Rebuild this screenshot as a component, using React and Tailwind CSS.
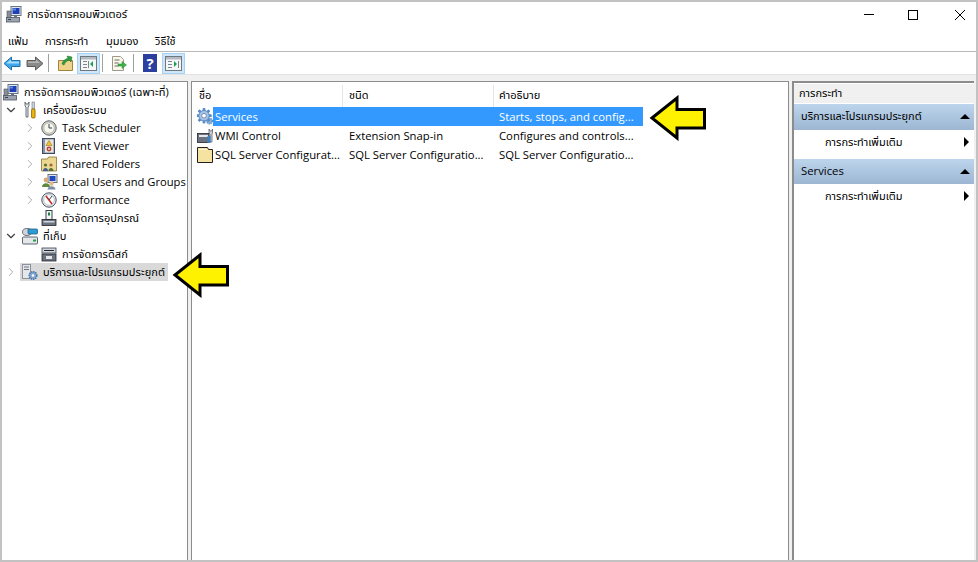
import { ChevronRight, ChevronDown } from 'lucide-react'

const fontStack = { fontFamily: '"Open Sans", "Noto Sans Thai", "Noto Sans", "DejaVu Sans", sans-serif' }

function ComputerIcon() {
  return (
    <svg width="16" height="17" viewBox="0 0 16 17" className="shrink-0">
      <rect x="5" y="0.5" width="10" height="9" fill="#dfe6ef" stroke="#6b7280" />
      <rect x="6.5" y="2" width="7" height="6" fill="#1f3fb8" />
      <rect x="7" y="2.5" width="3" height="2" fill="#5b8ce0" />
      <rect x="1" y="5" width="4" height="8" fill="#8a8f96" stroke="#4b5563" strokeWidth="0.6" />
      <rect x="0.5" y="11.5" width="13" height="4.5" fill="#9ca3af" stroke="#4b5563" strokeWidth="0.8" />
      <rect x="2" y="13" width="3" height="1" fill="#374151" />
      <rect x="8" y="9.5" width="3" height="2" fill="#6b7280" />
    </svg>
  )
}

function ToolsIcon() {
  return (
    <svg width="16" height="18" viewBox="0 0 16 18" className="shrink-0">
      <path d="M3 1v4l1 1v10h2V6l1-1V1L6 3H4z" fill="#e5e7eb" stroke="#4b5563" strokeWidth="0.8" />
      <rect x="10" y="1" width="2.4" height="7" fill="#d1d5db" stroke="#6b7280" strokeWidth="0.6" />
      <rect x="9.5" y="8" width="3.6" height="9" rx="1" fill="#eab308" stroke="#7c5a00" strokeWidth="0.7" />
    </svg>
  )
}

function ClockIcon() {
  return (
    <svg width="16" height="16" viewBox="0 0 16 16" className="shrink-0">
      <circle cx="8" cy="8" r="7.2" fill="#d6d3c4" stroke="#5b6470" />
      <circle cx="8" cy="8" r="5.2" fill="#f7f6ef" stroke="#a8a38f" strokeWidth="0.6" />
      <path d="M8 4v4h3" fill="none" stroke="#374151" strokeWidth="1" />
    </svg>
  )
}

function EventIcon() {
  return (
    <svg width="16" height="16" viewBox="0 0 16 16" className="shrink-0">
      <rect x="1.5" y="0.5" width="12" height="15" fill="#8794ab" stroke="#3f4a60" />
      <rect x="4" y="1.5" width="8.5" height="13" fill="#e8e6d8" />
      <path d="M8 2.5l3 5H5z" fill="#f2c230" stroke="#85660d" strokeWidth="0.5" />
      <circle cx="8" cy="11" r="2.4" fill="#b8403a" />
      <rect x="7" y="10.4" width="2" height="1.2" fill="#fff" />
    </svg>
  )
}

function SharedIcon() {
  return (
    <svg width="16" height="16" viewBox="0 0 16 16" className="shrink-0">
      <path d="M0.5 3h6l1-2h8v14H0.5z" fill="#ecd793" stroke="#8d7434" strokeWidth="0.8" />
      <circle cx="4.5" cy="9" r="1.6" fill="#54733a" />
      <path d="M2 15c0-4 5-4 5 0z" fill="#3d5d8f" />
      <circle cx="10" cy="9" r="1.6" fill="#9a6a3a" />
      <path d="M7.5 15c0-4 5-4 5 0z" fill="#54733a" />
    </svg>
  )
}

function UsersIcon() {
  return (
    <svg width="17" height="16" viewBox="0 0 17 16" className="shrink-0">
      <rect x="7" y="0.5" width="9" height="8" fill="#dfe6ef" stroke="#6b7280" />
      <rect x="8.5" y="2" width="6" height="5" fill="#2148bd" />
      <circle cx="5" cy="6" r="2.4" fill="#d9a874" />
      <path d="M1 13c0-5 8-5 8 0z" fill="#5d8a3c" />
      <circle cx="10.5" cy="9.5" r="2.2" fill="#e0b98a" />
      <path d="M6.5 15.5c0-4.5 8-4.5 8 0z" fill="#7b8ea8" />
    </svg>
  )
}

function PerfIcon() {
  return (
    <svg width="16" height="16" viewBox="0 0 16 16" className="shrink-0">
      <circle cx="8" cy="8" r="7.2" fill="#e5e7eb" stroke="#4b5563" />
      <circle cx="8" cy="8" r="5.3" fill="#fff" stroke="#9ca3af" strokeWidth="0.6" />
      <path d="M5 4l6 8" stroke="#c62828" strokeWidth="1.6" />
      <path d="M8 8l3-4" stroke="#374151" strokeWidth="1" />
    </svg>
  )
}

function DeviceIcon() {
  return (
    <svg width="16" height="16" viewBox="0 0 16 16" className="shrink-0">
      <rect x="5" y="0.5" width="6" height="9" fill="#f3f4f6" stroke="#374151" />
      <rect x="7" y="2.5" width="2" height="3" fill="#15803d" />
      <rect x="1" y="9.5" width="14" height="6" fill="#6b7280" stroke="#27272a" strokeWidth="0.8" />
      <rect x="2.5" y="11" width="11" height="1.5" fill="#d1d5db" />
    </svg>
  )
}

function StorageIcon() {
  return (
    <svg width="16" height="17" viewBox="0 0 16 17" className="shrink-0">
      <ellipse cx="5" cy="4" rx="4.5" ry="3.5" fill="#d1d5db" stroke="#4b5563" strokeWidth="0.8" />
      <rect x="6" y="1" width="9.5" height="5" rx="1" fill="#2f9bd4" stroke="#1e5f86" strokeWidth="0.8" />
      <rect x="0.5" y="9" width="15" height="7" rx="1" fill="#e5e7eb" stroke="#4b5563" strokeWidth="0.9" />
      <rect x="11" y="11.5" width="3" height="2" fill="#22a34a" />
    </svg>
  )
}

function DiskIcon() {
  return (
    <svg width="16" height="16" viewBox="0 0 16 16" className="shrink-0">
      <rect x="1" y="2" width="14" height="5" fill="#d1d5db" stroke="#374151" strokeWidth="0.8" />
      <rect x="3" y="4" width="10" height="1" fill="#27272a" />
      <rect x="1" y="8" width="14" height="7" fill="#6b7280" stroke="#27272a" strokeWidth="0.8" />
      <rect x="5" y="10" width="6" height="3" fill="#e5e7eb" />
    </svg>
  )
}

function GearIcon() {
  const teeth = [0, 45, 90, 135, 180, 225, 270, 315]
  return (
    <svg width="16" height="17" viewBox="0 0 16 17" className="shrink-0">
      <circle cx="12.5" cy="13" r="2.8" fill="#8fb0d6" stroke="#5b8bc4" strokeDasharray="1.2 0.8" strokeWidth="1.4" />
      {teeth.map((a) => (
        <rect key={a} x="5.8" y="0.2" width="2.4" height="15" fill="#5b8bc4" transform={`rotate(${a} 7 7.7)`} />
      ))}
      <circle cx="7" cy="7.7" r="5.2" fill="#a9c4e4" stroke="#5b8bc4" />
      <circle cx="7" cy="7.7" r="2.3" fill="#fff" stroke="#47709f" strokeWidth="0.7" />
    </svg>
  )
}

function ServicesTreeIcon() {
  return (
    <svg width="16" height="17" viewBox="0 0 16 17" className="shrink-0">
      <rect x="0.5" y="0.5" width="8" height="14" fill="#e5e7eb" stroke="#8b929c" />
      <rect x="2" y="2.5" width="5" height="1" fill="#6b7280" />
      <rect x="2" y="5" width="5" height="1" fill="#6b7280" />
      <circle cx="11" cy="11.5" r="3.8" fill="#7fa6cf" stroke="#4f7aa8" strokeDasharray="1.4 0.8" strokeWidth="1.6" />
      <circle cx="11" cy="11.5" r="1.3" fill="#fff" />
    </svg>
  )
}

function WmiIcon() {
  return (
    <svg width="16" height="16" viewBox="0 0 16 16" className="shrink-0">
      <rect x="0.5" y="5.5" width="11.5" height="9" fill="#6b7280" stroke="#27272a" strokeWidth="0.8" />
      <rect x="2" y="7" width="9" height="2" fill="#e5e7eb" />
      <path d="M12 1v4l1 1v8h2V6l.5-1V1l-1 2h-1.4z" fill="#d1d5db" stroke="#4b5563" strokeWidth="0.7" />
      <rect x="10.5" y="8" width="3" height="7" fill="#3b82c4" />
    </svg>
  )
}

function FolderIcon() {
  return (
    <svg width="16" height="16" viewBox="0 0 16 16" className="shrink-0">
      <path d="M0.5 0.5h10l1 2h4v13H0.5z" fill="#f6e3a1" stroke="#222" />
      <path d="M2 2h8v1H2z" fill="#fff6d2" />
    </svg>
  )
}

function YellowArrow({ className }) {
  return (
    <svg width="58" height="46" viewBox="0 0 58 46" className={`absolute ${className}`}>
      <path d="M3 23L28 3v11.5h27.5v18.5H28V43z" fill="#fff200" stroke="#000" strokeWidth="3" />
    </svg>
  )
}

function ToolBtn({ children }) {
  return (
    <div className="flex h-[21px] w-[23px] items-center justify-center border border-[#a6d3f5] bg-[#cfe6f9]">
      {children}
    </div>
  )
}

function PaneIcon({ right }) {
  return (
    <svg width="17" height="15" viewBox="0 0 17 15">
      <rect x="0.5" y="0.5" width="16" height="14" fill="#f4f6f8" stroke="#6f7780" />
      <rect x="1" y="1" width="15" height="2.5" fill="#b4bac2" />
      <rect x="3" y="5" width="4" height="1" fill="#7b8591" />
      <rect x="3" y="8" width="4" height="1" fill="#7b8591" />
      <rect x="3" y="11" width="4" height="1" fill="#7b8591" />
      <path d={right ? 'M9 5l3 3-3 3z' : 'M13 5l-3 3 3 3z'} fill="#16a34a" />
      <rect x={right ? 13 : 8} y="5" width="1" height="7" fill="#7b8591" />
    </svg>
  )
}

function Toolbar() {
  return (
    <div className="flex h-[22px] items-center">
      <svg width="18" height="15" viewBox="0 0 18 15" className="ml-px">
        <path d="M1 7.5L8.5 1v3.5h8.5v6H8.5V14z" fill="#3fa6e8" stroke="#1f6fb0" strokeLinejoin="round" />
        <path d="M3.5 7L8 3.5v2h8v2H4z" fill="#a4dcf9" />
      </svg>
      <svg width="18" height="15" viewBox="0 0 18 15" className="ml-[5px]">
        <path d="M17 7.5L9.5 1v3.5H1v6h8.5V14z" fill="#8a8a8a" stroke="#5b5b5b" strokeLinejoin="round" />
        <path d="M2 5.5h8v-2l4 3.5H2z" fill="#b5b5b5" />
      </svg>
      <div className="ml-[4px] h-[18px] w-px bg-[#a0a0a0]" />
      <div className="ml-[9px]">
        <svg width="15" height="16" viewBox="0 0 15 16">
          <path d="M0.5 5.5h14v10H0.5z" fill="#efd38a" stroke="#a3843c" />
          <path d="M4 9C5 5 8 4 10 3L9 1l5 1-1 5-2-2C9 6 7 7 6 10z" fill="#2e9e3e" stroke="#1d6f2a" strokeWidth="0.5" />
        </svg>
      </div>
      <div className="ml-[4px]">
        <ToolBtn><PaneIcon /></ToolBtn>
      </div>
      <div className="ml-[2px] h-[18px] w-px bg-[#a0a0a0]" />
      <div className="ml-[8px]">
        <svg width="16" height="15" viewBox="0 0 16 15">
          <path d="M1.5 0.5h8l3 3v11h-11z" fill="#fbf8ea" stroke="#9a9a8c" />
          <path d="M3.5 4h5M3.5 7h4M3.5 10h4" stroke="#6b6b60" />
          <path d="M7 8h4V5.5L15.5 9 11 12.5V10H7z" fill="#3fb24a" stroke="#2a8a35" strokeWidth="0.5" />
        </svg>
      </div>
      <div className="ml-[6px] h-[18px] w-px bg-[#a0a0a0]" />
      <div className="ml-[9px] flex h-[18px] w-[14px] items-center justify-center bg-[#2a3f9e] text-[15px] font-bold leading-none text-white">?</div>
      <div className="ml-[5px]">
        <ToolBtn><PaneIcon right /></ToolBtn>
      </div>
    </div>
  )
}

const caret = { right: ChevronRight, down: ChevronDown }

function TreeRow({ indent, expand, icon, label, thai, selected }) {
  const Caret = caret[expand]
  return (
    <div className="flex h-[18px] items-center" style={{ paddingLeft: indent }}>
      <div className="flex w-[18px] shrink-0 items-center justify-center">
        {Caret && <Caret size={14} strokeWidth={expand === 'down' ? 2 : 1.6} className={expand === 'down' ? 'text-[#404040]' : 'text-[#a6a6a6]'} />}
      </div>
      <div className={`flex h-[18px] items-center gap-[5px] pl-[2px] pr-[3px] ${selected ? 'bg-[#d9d9d9]' : ''}`}>
        <div className="flex w-[16px] shrink-0 justify-center">{icon}</div>
        <span className={`whitespace-nowrap ${thai ? 'text-[11px] tracking-[0.06px]' : ''}`}>{label}</span>
      </div>
    </div>
  )
}

function TreePane() {
  return (
    <div className="w-[186px] shrink-0 overflow-hidden border-t border-r border-[#8c8c8c] bg-white pt-px text-[11.2px] text-black">
      <div className="flex h-[18px] items-center gap-[5px] pl-[1px]">
        <ComputerIcon />
        <span className="whitespace-nowrap text-[11px] tracking-[0.12px]">การจัดการคอมพิวเตอร์ (เฉพาะที่)</span>
      </div>
      <TreeRow indent={0} expand="down" icon={<ToolsIcon />} label="เครื่องมือระบบ" thai />
      <TreeRow indent={19} expand="right" icon={<ClockIcon />} label="Task Scheduler" />
      <TreeRow indent={19} expand="right" icon={<EventIcon />} label="Event Viewer" />
      <TreeRow indent={19} expand="right" icon={<SharedIcon />} label="Shared Folders" />
      <TreeRow indent={19} expand="right" icon={<UsersIcon />} label="Local Users and Groups" />
      <TreeRow indent={19} expand="right" icon={<PerfIcon />} label="Performance" />
      <TreeRow indent={19} icon={<DeviceIcon />} label="ตัวจัดการอุปกรณ์" thai />
      <TreeRow indent={0} expand="down" icon={<StorageIcon />} label="ที่เก็บ" thai />
      <TreeRow indent={19} icon={<DiskIcon />} label="การจัดการดิสก์" thai />
      <TreeRow indent={0} expand="right" icon={<ServicesTreeIcon />} label="บริการและโปรแกรมประยุกต์" thai selected />
    </div>
  )
}

const rows = [
  { icon: <GearIcon />, name: 'Services', type: '', desc: 'Starts, stops, and config...', selected: true },
  { icon: <WmiIcon />, name: 'WMI Control', type: 'Extension Snap-in', desc: 'Configures and controls...' },
  { icon: <FolderIcon />, name: 'SQL Server Configurat...', type: 'SQL Server Configuratio...', desc: 'SQL Server Configuratio...' },
]

function ListPane() {
  return (
    <div className="w-[598px] shrink-0 border-t border-x border-[#8c8c8c] bg-white text-[11.3px] text-black">
      <div className="flex h-[25px] pt-[3px] text-[11px]">
        <div className="flex w-[151px] items-center border-r border-[#e5e5e5] pb-[2px] pl-[7px]">ชื่อ</div>
        <div className="flex w-[151px] items-center border-r border-[#e5e5e5] pb-[2px] pl-[6px]">ชนิด</div>
        <div className="flex w-[150px] items-center pb-[2px] pl-[5px]">คำอธิบาย</div>
      </div>
      {rows.map((r) => (
        <div key={r.name} className="flex h-[19px] items-center">
          <div className="flex w-[21px] shrink-0 justify-end">{r.icon}</div>
          <div className={`flex h-[19px] w-[430px] items-center pt-px ${r.selected ? 'bg-[#3399ff] text-white' : ''}`}>
            <span className="w-[136px] whitespace-nowrap pl-[2px]">{r.name}</span>
            <span className="w-[150px] whitespace-nowrap">{r.type}</span>
            <span className="whitespace-nowrap">{r.desc}</span>
          </div>
        </div>
      ))}
    </div>
  )
}

function ActionGroup({ title, headClass }) {
  return (
    <>
      <div className={`flex items-center justify-between bg-gradient-to-b from-[#bdd5ec] to-[#9cb6d3] pb-px pl-[7px] pr-[4px] ${headClass}`}>
        <span className="whitespace-nowrap">{title}</span>
        <div className="h-0 w-0 border-x-[5px] border-b-[5px] border-x-transparent border-b-black" />
      </div>
      <div className="flex h-[28px] items-center justify-between pb-[4px] pl-[31px] pr-[5px]">
        <span className="whitespace-nowrap text-[11px]">การกระทำเพิ่มเติม</span>
        <div className="h-0 w-0 border-y-[5px] border-l-[5px] border-y-transparent border-l-black" />
      </div>
    </>
  )
}

function ActionPane() {
  return (
    <div className="w-[182px] shrink-0 border-t-2 border-l-2 border-[#8c8c8c] bg-white pt-[1px] text-[11px] text-black">
      <div className="flex h-[19px] items-center bg-[#f0f0f0] pl-[5px]">การกระทำ</div>
      <div className="mt-px">
        <ActionGroup title="บริการและโปรแกรมประยุกต์" headClass="h-[26px]" />
        <div className="h-px" />
        <ActionGroup title={<span className="text-[11.3px]">Services</span>} headClass="h-[25px]" />
      </div>
    </div>
  )
}

export default function App() {
  return (
    <div className="relative flex h-[562px] w-[978px] flex-col overflow-hidden border-2 border-[#c2c2c2] bg-white" style={fontStack}>
      <div className="flex h-[29px] shrink-0 items-center justify-between pb-[4px] text-[11px] text-black">
        <div className="flex items-center gap-[5px] pl-[4px]">
          <ComputerIcon />
          <span>การจัดการคอมพิวเตอร์</span>
        </div>
        <div className="flex items-center pr-[11px]">
          <div className="h-px w-[10px] bg-black" />
          <div className="ml-[34px] h-[10px] w-[10px] border border-black" />
          <svg width="10" height="10" viewBox="0 0 10 10" className="ml-[37px]">
            <path d="M0 0l10 10M10 0L0 10" stroke="#000" strokeWidth="1" />
          </svg>
        </div>
      </div>
      <div className="flex h-[21px] shrink-0 items-center border-b border-[#b9b9b9] pl-[6px] text-[11px] text-black">
        <span className="w-[37px]">แฟ้ม</span>
        <span className="w-[61px]">การกระทำ</span>
        <span className="w-[49px]">มุมมอง</span>
        <span>วิธีใช้</span>
      </div>
      <div className="shrink-0 border-b border-[#e2e2e2]">
        <Toolbar />
      </div>
      <div className="flex min-h-0 flex-1 bg-[#f0f0f0] pt-[6px]">
        <TreePane />
        <div className="w-[3px] shrink-0" />
        <ListPane />
        <div className="w-[3px] shrink-0" />
        <ActionPane />
      </div>
      <YellowArrow className="left-[170px] top-[250px]" />
      <YellowArrow className="left-[647px] top-[93px]" />
    </div>
  )
}
